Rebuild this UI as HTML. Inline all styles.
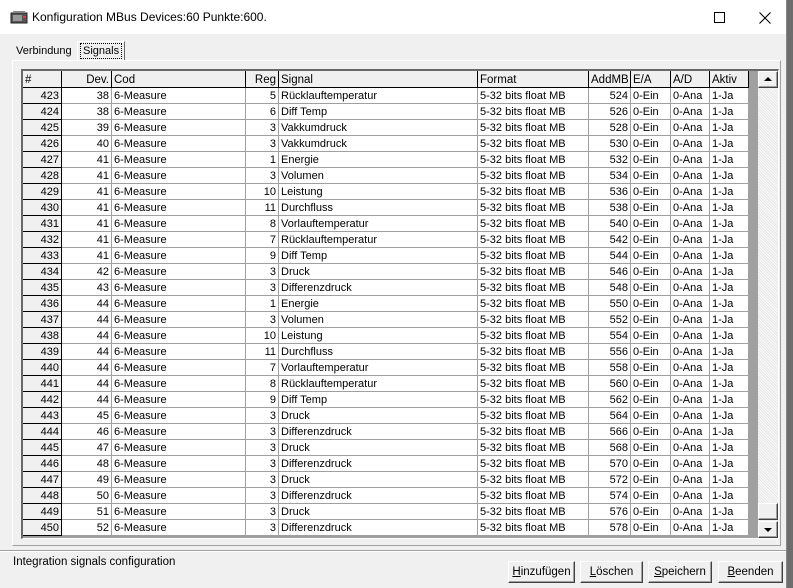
<!DOCTYPE html>
<html><head><meta charset="utf-8"><style>
*{box-sizing:border-box;margin:0;padding:0}
body{width:793px;height:588px;background:#6d6d6d;font:11px/1 "Liberation Sans",sans-serif;color:#000;position:relative;overflow:hidden}
.win{position:absolute;left:0;top:0;width:787px;height:588px;background:#f0f0f0;border-right:1px solid #888}
.title{position:absolute;left:0;top:0;width:786px;height:34px;background:#fff}
.title .t{position:absolute;left:32px;top:11px;font-size:12px;color:#000}
.abs{position:absolute}
.tab{position:absolute;font-size:11px}
.panel{position:absolute;left:12px;top:60px;width:769px;height:486px;border:1px solid #fff;border-right-color:#a0a0a0;border-bottom-color:#a0a0a0}
.grid{position:absolute;left:21px;top:69px;width:758px;height:470px;background:#a0a0a0;border-left:2px solid #696969;border-top:2px solid #696969;border-right:1px solid #fff;border-bottom:1px solid #fff}
.row{position:absolute;left:0;display:flex;height:16px}
.c{height:16px;border-right:1px solid #a0a0a0;border-bottom:1px solid #a0a0a0;background:#fff;padding:0 2px;line-height:17px;white-space:nowrap;overflow:hidden}
.r{text-align:right}
.h .c{height:17px;background:#f0f0f0;border-right:1px solid #000;border-bottom:1px solid #000;line-height:18px;font-size:11.5px}
.f{background:#f0f0f0!important;border-right:1px solid #000!important;border-bottom:1px solid #000!important}
.sb{position:absolute;left:735px;top:0;width:20px;height:467px;background:#f4f4f4;background-image:repeating-linear-gradient(45deg,#e6e6e6 0 1px,#fafafa 1px 2px)}
.btn{position:absolute;height:22px;border:1px solid #fff;border-right-color:#404040;border-bottom-color:#404040;background:#f0f0f0;box-shadow:inset -1px -1px 0 #a0a0a0;text-align:center;line-height:21px;font-size:11.5px}
.sbb{position:absolute;left:0;width:20px;height:17px;border:1px solid #fff;border-right-color:#404040;border-bottom-color:#404040;background:#f0f0f0;box-shadow:inset -1px -1px 0 #a0a0a0}
</style></head><body>
<div class="win">
<div class="title">
<svg class="abs" style="left:10px;top:10px" width="18" height="14"><rect x="1" y="3" width="16" height="10" fill="#555" stroke="#222"/><rect x="3" y="5" width="9" height="6" fill="#999"/><rect x="13" y="6" width="3" height="2" fill="#e33"/><rect x="3" y="1" width="12" height="2" fill="#888"/></svg>
<div class="t">Konfiguration MBus Devices:60 Punkte:600.</div>
<div class="abs" style="left:714px;top:12px;width:11px;height:11px;border:1px solid #000"></div>
<svg class="abs" style="left:759px;top:12px" width="12" height="12"><path d="M0.5 0.5L11.5 11.5M11.5 0.5L0.5 11.5" stroke="#000" stroke-width="1.1"/></svg>
</div>
<div class="tab" style="left:16px;top:46px">Verbindung</div>
<div class="abs" style="left:77px;top:41px;width:48px;height:20px;background:#f0f0f0;border:1px solid #fff;border-right-color:#696969;border-bottom:none"></div>
<div class="tab" style="left:80px;top:43px;border:1px dotted #000;padding:2px 2px 1px">Signals</div>
<div class="panel"></div>
<div class="grid">
<div class="row h" style="top:0"><div class="c" style="width:39px">#</div><div class="c r" style="width:50px">Dev.</div><div class="c" style="width:134px">Cod</div><div class="c r" style="width:33px">Reg</div><div class="c" style="width:199px">Signal</div><div class="c" style="width:111px">Format</div><div class="c r" style="width:42px">AddMB</div><div class="c" style="width:40px">E/A</div><div class="c" style="width:39px">A/D</div><div class="c" style="width:39px">Aktiv</div></div>
<div id="rows"></div>
<div class="sb"><div class="sbb" style="top:0"><svg class="abs" style="left:5px;top:5px" width="8" height="5"><path d="M4 0L8 4H0Z" fill="#000"/></svg></div>
<div class="sbb" style="top:432px"></div>
<div class="sbb" style="top:450px"><svg class="abs" style="left:5px;top:6px" width="8" height="5"><path d="M0 0H8L4 4Z" fill="#000"/></svg></div></div>
</div>
<div class="abs" style="left:0;top:550px;width:786px;border-top:1px solid #a0a0a0;border-bottom:1px solid #fff"></div>
<div class="abs" style="left:13px;top:557px;font-size:11.5px">Integration signals configuration</div>
<div class="btn" style="left:508px;top:561px;width:67px"><u>H</u>inzufügen</div>
<div class="btn" style="left:580px;top:561px;width:63px"><u>L</u>öschen</div>
<div class="btn" style="left:648px;top:561px;width:64px"><u>S</u>peichern</div>
<div class="btn" style="left:718px;top:561px;width:65px"><u>B</u>eenden</div>
</div>
<script>
var d=[[423,38,5,"Rücklauftemperatur"],[424,38,6,"Diff Temp"],[425,39,3,"Vakkumdruck"],[426,40,3,"Vakkumdruck"],[427,41,1,"Energie"],[428,41,3,"Volumen"],[429,41,10,"Leistung"],[430,41,11,"Durchfluss"],[431,41,8,"Vorlauftemperatur"],[432,41,7,"Rücklauftemperatur"],[433,41,9,"Diff Temp"],[434,42,3,"Druck"],[435,43,3,"Differenzdruck"],[436,44,1,"Energie"],[437,44,3,"Volumen"],[438,44,10,"Leistung"],[439,44,11,"Durchfluss"],[440,44,7,"Vorlauftemperatur"],[441,44,8,"Rücklauftemperatur"],[442,44,9,"Diff Temp"],[443,45,3,"Druck"],[444,46,3,"Differenzdruck"],[445,47,3,"Druck"],[446,48,3,"Differenzdruck"],[447,49,3,"Druck"],[448,50,3,"Differenzdruck"],[449,51,3,"Druck"],[450,52,3,"Differenzdruck"]];
var h="";d.forEach(function(r,i){h+='<div class="row" style="top:'+(17+i*16)+'px"><div class="c r f" style="width:39px">'+r[0]+'</div><div class="c r" style="width:50px">'+r[1]+'</div><div class="c" style="width:134px">6-Measure</div><div class="c r" style="width:33px">'+r[2]+'</div><div class="c" style="width:199px">'+r[3]+'</div><div class="c" style="width:111px">5-32 bits float MB</div><div class="c r" style="width:42px">'+(524+i*2)+'</div><div class="c" style="width:40px">0-Ein</div><div class="c" style="width:39px">0-Ana</div><div class="c" style="width:39px">1-Ja</div></div>';});
document.getElementById("rows").innerHTML=h;
</script>
</body></html>
